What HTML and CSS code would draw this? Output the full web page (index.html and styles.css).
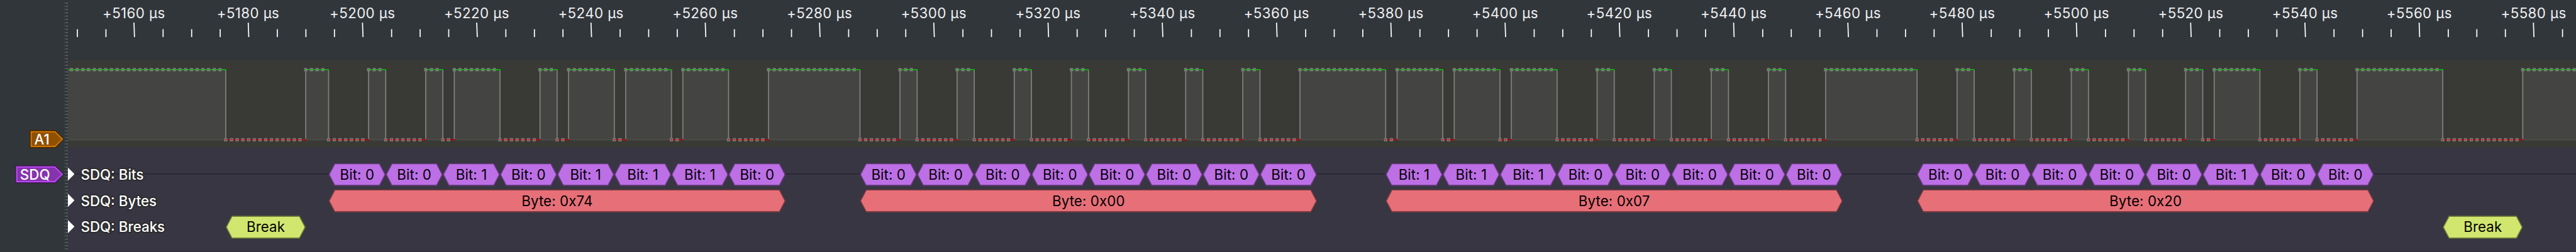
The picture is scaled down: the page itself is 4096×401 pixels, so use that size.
FILE: index.html
```html
<!DOCTYPE html>
<html lang="en">
<head>
<meta charset="utf-8">
<title>SDQ capture</title>
<link rel="stylesheet" href="styles.css">
</head>
<body>
<div class="view">
  <aside class="sidebar">
    <div class="tags">
      <div class="tag tag-a1">
        <svg class="tag-shape" viewBox="0 0 62 33"><path class="tag-edge" d="M0 0H48L62 16.5L48 33H0Z"/><path class="tag-body" d="M3 3H46.5L60 16.5L46.5 30H3Z"/></svg>
        <span class="tag-text">A1</span>
      </div>
      <div class="tag tag-sdq">
        <svg class="tag-shape" viewBox="0 0 88 33"><path class="tag-edge" d="M0 0H74L88 16.5L74 33H0Z"/><path class="tag-body" d="M3 3H72.5L86 16.5L72.5 30H3Z"/></svg>
        <span class="tag-text">SDQ</span>
      </div>
    </div>
    <svg class="splitter" viewBox="0 0 6 460"><path class="dots-thin" d="M0.5 4V456"/><path class="dots-wide" d="M4 4V456"/></svg>
  </aside>
  <main class="lanes">
    <header class="ruler">
      <div class="ruler-labels" id="labels"></div>
      <svg class="ruler-ticks" id="ticks" viewBox="0 0 4578 27"></svg>
    </header>
    <section class="trace"><svg class="wave" id="wave" viewBox="0 0 4578 160"></svg></section>
    <section class="decode">
      <div class="row row-bits"><div class="row-head"><i class="arrow"></i><span class="row-label">SDQ: Bits</span></div><div class="chips" id="bits"></div></div>
      <div class="row row-bytes"><div class="row-head"><i class="arrow"></i><span class="row-label">SDQ: Bytes</span></div><div class="chips" id="bytes"></div></div>
      <div class="row row-breaks"><div class="row-head"><i class="arrow"></i><span class="row-label">SDQ: Breaks</span></div><div class="chips" id="breaks"></div></div>
    </section>
  </main>
</div>
<script src="app.js"></script>
</body>
</html>
```
FILE: styles.css
```css
:root { --u: 0.87112px; --us: calc(var(--u) * 10.43); }
* { box-sizing: border-box; }
body {
  margin: 0;
  overflow: hidden;
  background: #31363b;
  font-family: Inter, "Liberation Sans", sans-serif;
  font-size: calc(var(--u) * 25.6);
  line-height: 1;
  white-space: nowrap;
}
svg { display: block; }
.view { display: flex; width: 4096px; height: 401px; overflow: hidden; }

.sidebar { display: flex; flex: none; width: calc(var(--u) * 124); background: #31363a; }
.tags {
  display: flex;
  flex-direction: column;
  align-items: flex-end;
  gap: calc(var(--u) * 31);
  width: calc(var(--u) * 118);
  padding: calc(var(--u) * 238) calc(var(--u) * 2) 0 0;
}
.tag { display: grid; height: calc(var(--u) * 33); color: #fff; font-weight: 500; }
.tag > * { grid-area: 1 / 1; }
.tag-a1 { width: calc(var(--u) * 62); }
.tag-sdq { width: calc(var(--u) * 88); }
.tag-shape { width: 100%; height: 100%; }
.tag-text { align-self: center; padding: calc(var(--u) * 1) 0 0 calc(var(--u) * 8.5); letter-spacing: 0.1px; }
.tag-body { stroke-width: 2; }
.tag-a1 .tag-edge { fill: #472800; }
.tag-a1 .tag-body { fill: #8f5000; stroke: #db7b00; }
.tag-sdq .tag-edge { fill: #431a57; }
.tag-sdq .tag-body { fill: #8633ae; stroke: #c44dff; }
.splitter { width: calc(var(--u) * 6); height: 401px; fill: none; stroke: #7b7f82; stroke-dasharray: 2 4; }
.dots-thin { stroke-width: 1; }
.dots-wide { stroke-width: 2; }

.lanes { flex: 1; min-width: 0; }
.ruler { height: calc(var(--u) * 110); padding-top: calc(var(--u) * 9.5); color: #eff0f1; overflow: hidden; }
.ruler-labels { display: flex; height: calc(var(--u) * 31.5); padding-left: calc(var(--u) * 16); align-items: flex-start; line-height: calc(var(--u) * 29); }
.ruler-label { flex: none; width: calc(var(--us) * 20); text-align: center; letter-spacing: 0.4px; }
.ruler-ticks { width: calc(var(--u) * 4578); height: calc(var(--u) * 27); fill: none; stroke: #fcfcfc; stroke-width: 2; }

.trace { height: calc(var(--u) * 160); background: #393936; }
.wave { width: calc(var(--u) * 4578); height: calc(var(--u) * 160); fill: none; stroke-width: 2; }
.wave-fill { fill: #444442; }
.wave-base { stroke: #4c4c4a; }
.wave-edge { stroke: #808080; }
.wave-high { stroke: #00c000; }
.wave-low { stroke: #c00000; }
.dot { fill: #7b7b7b; }
.dot-high { fill: #18b018; }
.dot-low { fill: #c00000; }

.decode {
  display: flex;
  flex-direction: column;
  gap: calc(var(--u) * 6);
  height: calc(var(--u) * 190.4);
  padding-top: calc(var(--u) * 28);
  background: #383643;
  border-bottom: 1px solid #302d3a;
}
.row { display: flex; height: calc(var(--u) * 42); }
.row-bits { background: linear-gradient(#292733, #292733) 0 calc(var(--u) * 19) / 100% calc(var(--u) * 2) no-repeat; }
.row-head { display: flex; align-items: center; gap: calc(var(--u) * 11.5); flex: none; width: calc(var(--u) * 288); color: #fff; }
.arrow { width: calc(var(--u) * 12); height: calc(var(--u) * 24); margin-top: calc(var(--u) * -2); background: #fff; clip-path: polygon(0 0, 100% 50%, 0 100%); }
.row-label {
  font-weight: 500;
  letter-spacing: 0;
  -webkit-text-stroke: 3.6px #2a2a2c;
  stroke-linejoin: round;
  paint-order: stroke fill;
}
.chips { display: flex; flex: none; }
.chip {
  --tip: calc(var(--u) * 11);
  display: flex;
  flex: none;
  padding: calc(var(--u) * 2);
  color: #000;
  background: var(--edge);
  clip-path: polygon(0 50%, var(--tip) 0, calc(100% - var(--tip)) 0, 100% 50%, calc(100% - var(--tip)) 100%, var(--tip) 100%);
}
.chip-body {
  --tip: calc(var(--u) * 10);
  display: grid;
  flex: 1;
  place-items: center;
  background: var(--fill);
  letter-spacing: 0.1px;
  clip-path: polygon(0 50%, var(--tip) 0, calc(100% - var(--tip)) 0, 100% 50%, calc(100% - var(--tip)) 100%, var(--tip) 100%);
}
.row-bits .chip { --edge: #65397b; --fill: #bd6fe6; }
.row-bytes .chip { --edge: #7a3a40; --fill: #e76f78; }
.row-breaks .chip { --edge: #6f7a38; --fill: #d1e66e; }
```
FILE: app.js
```js
// Horizontal scale: drawing units per microsecond, measured from the lane's left edge.
const US = 10.43;
const X = t => 288 + US * (t - 5176);
const END = 5589;

// Times at which the line toggles; it is high before the first one.
const edges = [5176, 5190, 5194, 5201, 5204, 5211, 5214, 5216, 5224, 5231, 5234, 5236, 5244, 5246,
  5254, 5256, 5264, 5271, 5287, 5294, 5297, 5304, 5307, 5314, 5317, 5324, 5327, 5334, 5337, 5344,
  5347, 5354, 5357, 5364, 5379, 5381, 5389, 5391, 5399, 5401, 5409, 5416, 5419, 5426, 5429, 5436,
  5439, 5446, 5449, 5456, 5472, 5479, 5482, 5489, 5492, 5499, 5502, 5509, 5512, 5519, 5522, 5524,
  5532, 5539, 5542, 5549, 5564, 5578];

let fills = '', lines = '', verticals = '', dots = '';
let from = 5148, high = true;
for (const to of [...edges, END]) {
  const a = Math.max(0, X(from)), b = X(to), y = high ? 17 : 145;
  if (high) fills += `<rect class="wave-fill" x="${a}" y="17" width="${b - a}" height="128"/>`;
  lines += `<path class="${high ? 'wave-high' : 'wave-low'}" d="M${a} ${y}H${b + 1}"/>`;
  for (let t = from; t < to; t++) {
    const x = X(t);
    if (x < 2) continue;
    dots += `<rect class="dot" x="${x - 3}" y="${y - 3}" width="6" height="6" rx="1"/>` +
      `<rect class="${high ? 'dot-high' : 'dot-low'}" x="${x - 1}" y="${y - 1}" width="2" height="2"/>`;
  }
  if (to !== END) verticals += `<path class="wave-edge" d="M${b} 18V144"/>`;
  from = to;
  high = !high;
}
document.getElementById('wave').innerHTML =
  fills + '<path class="wave-base" d="M0 145H4578"/>' + verticals + lines + dots;

let ticks = '', labels = '';
for (let t = 5150; t <= 5585; t += 5) {
  const major = t % 20 === 0, x = X(t);
  ticks += major ? `<path d="M${x - 1} 0L${x} 27"/>` : `<path d="M${x} 12V27"/>`;
  if (major) labels += `<span class="ruler-label">+${t} µs</span>`;
}
document.getElementById('ticks').innerHTML = ticks;
document.getElementById('labels').innerHTML = labels;

// Each annotation is [start, end, text]; gaps between them become margins.
function fillRow(id, items) {
  let at = 5176;
  document.getElementById(id).innerHTML = items.map(([start, end, text]) => {
    const html = `<div class="chip" style="margin-left:calc(var(--us) * ${start - at});width:calc(var(--us) * ${end - start})"><span class="chip-body">${text}</span></div>`;
    at = end;
    return html;
  }).join('');
}
const frames = [[5194, '0x74', '00101110'], [5287, '0x00', '00000000'], [5379, '0x07', '11100000'], [5472, '0x20', '00000100']];
fillRow('bits', frames.flatMap(([t, , bits]) => [...bits].map((b, i) => [t + i * 10, t + i * 10 + 10, 'Bit: ' + b])));
fillRow('bytes', frames.map(([t, hex]) => [t, t + 80, 'Byte: ' + hex]));
fillRow('breaks', [[5176, 5190, 'Break'], [5564, 5578, 'Break']]);
```
